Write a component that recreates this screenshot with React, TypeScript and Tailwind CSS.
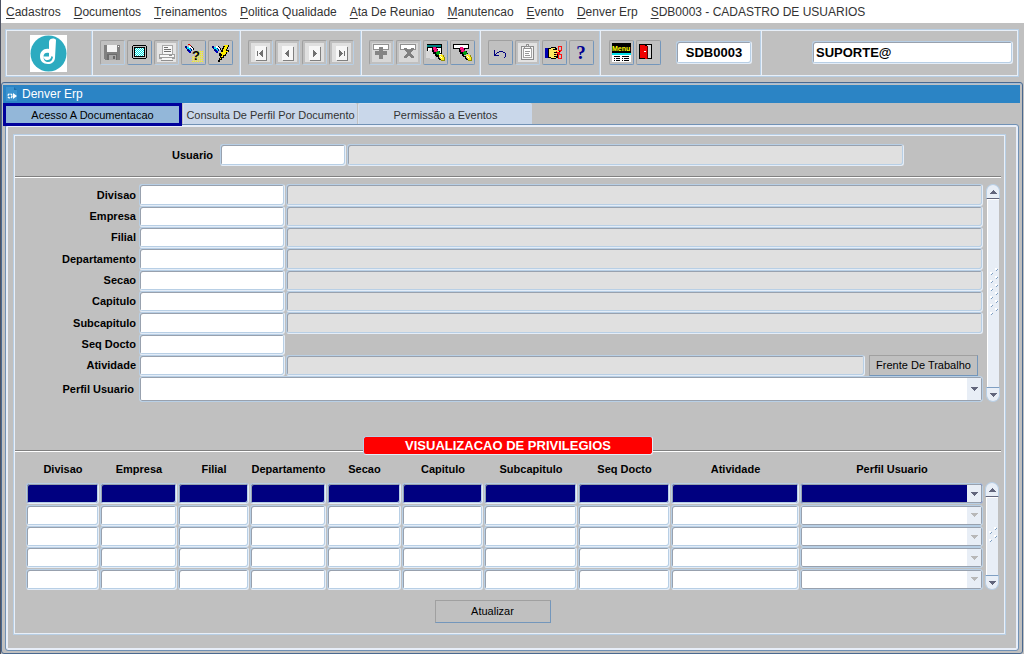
import { useState, type ReactNode } from "react";
import clsx from "clsx";

const BEVEL =
  "rounded-[3px] border border-t-[#b8cfe5] border-l-[#b8cfe5] border-r-[#e4edf8] border-b-[#e4edf8] shadow-[inset_1px_1px_0_#98a1ae,inset_-1px_-1px_0_#b8cfe5] outline-none";

const SEPARATOR = "border-r border-[#e8eff8] shadow-[inset_-1px_0_0_#b8cfe5]";

const MENU = [
  "Cadastros",
  "Documentos",
  "Treinamentos",
  "Politica Qualidade",
  "Ata De Reuniao",
  "Manutencao",
  "Evento",
  "Denver Erp",
  "SDB0003 - CADASTRO DE USUARIOS",
];

const TABS = ["Acesso A Documentacao", "Consulta De Perfil Por Documento", "Permissão a Eventos"];

const FIELDS = [
  "Divisao",
  "Empresa",
  "Filial",
  "Departamento",
  "Secao",
  "Capitulo",
  "Subcapitulo",
  "Seq Docto",
  "Atividade",
];

const COLUMNS = [
  { label: "Divisao", width: "w-[74px]" },
  { label: "Empresa", width: "w-[78px]" },
  { label: "Filial", width: "w-[72px]" },
  { label: "Departamento", width: "w-[77px]" },
  { label: "Secao", width: "w-[75px]" },
  { label: "Capitulo", width: "w-[82px]" },
  { label: "Subcapitulo", width: "w-[94px]" },
  { label: "Seq Docto", width: "w-[93px]" },
  { label: "Atividade", width: "w-[129px]" },
  { label: "Perfil Usuario", width: "" },
];

function Icon({ children }: { children: ReactNode }) {
  return (
    <svg width="19" height="19" viewBox="0 0 19 19" shapeRendering="crispEdges" className="shrink-0 overflow-visible" aria-hidden="true">
      {children}
    </svg>
  );
}

function Torch() {
  return (
    <>
      <path d="M1 3h2v1h2v1h2v1h1v2h-1v2h-1v-1h-1v-1h-2v-2h-1v-1h-1z" fill="#000080" />
      <path d="M3 4h2v1h1v1h1v2h-1v-1h-1v-1h-2z" fill="#00e5ff" />
      <path d="M5 3h2v1h1v1h1v2h-1v-1h-1v-1h-2z" fill="#fff" />
      <path d="M7 3h1v1h1v1h1v2h-1v-2h-1v-1h-1z" fill="#000" />
      <path d="M4 8h3v1h-1v1h-1v-1h-1z" fill="#0000c8" />
    </>
  );
}

function Marker() {
  return (
    <>
      <path d="M6 5h1v2h1v2h2v2h1v2h2v2h2v2h-2v-1h-1v-2h-2v-1h-1v-2h-2v-2h-1zM10 5h1v1h1v2h2v2h1v1h-1v-1h-2v-2h-1v-2h-1z" fill="#000" />
      <path d="M7 4h3v1h1v2h1v1h-1v1h-3v-2h-1z" fill="#f00080" />
      <path d="M8 5h1v1h-1zM9 7h1v1h-1z" fill="#ff5050" />
      <path d="M11 8h2v1h1v2h-1v1h-2v-1h-1v-2h1z" fill="#00a010" />
      <path d="M13 12h2v-1h1v1h1v2h1v3h-3v-1h-1v-2h-1z" fill="#ffee20" />
      <path d="M17 12h1v2h1v4h-4v-1h3v-3h-1z" fill="#909000" />
      <path d="M14 13h1v1h1v1h-1v-1h-1z" fill="#fff" />
    </>
  );
}

function Plate({ children }: { children: ReactNode }) {
  return (
    <Icon>
      <rect width="19" height="19" fill="#e0e0e0" />
      <rect x="5" y="4" width="11" height="14" fill="#808080" />
      <rect x="4" y="3" width="11" height="14" fill="#f7f7f7" />
      {children}
    </Icon>
  );
}

const ICONS: Record<string, ReactNode> = {
  Salvar: (
    <Icon>
      <path d="M1 2h16v15h-15v-1h-1z" fill="#808080" />
      <rect x="4" y="2" width="10" height="7" fill="#f4f4f4" />
      <rect x="4" y="11" width="10" height="6" fill="#6c6c6c" />
      <rect x="6" y="12" width="7" height="5" fill="#a8a8a8" />
      <rect x="10" y="13" width="2" height="3" fill="#686868" />
      <rect x="15" y="3" width="1" height="1" fill="#fff" />
    </Icon>
  ),
  Tela: (
    <Icon>
      <defs>
        <pattern id="screen-dither" width="2" height="2" patternUnits="userSpaceOnUse">
          <rect width="2" height="2" fill="#fff" />
          <rect width="1" height="1" fill="#00e0e0" />
          <rect x="1" y="1" width="1" height="1" fill="#00e0e0" />
        </pattern>
      </defs>
      <path d="M3 2h13v1h1v12h-1v1h-13v-1h-1v-12h1z" fill="#000" />
      <path d="M3 3h13v12h-13z" fill="#c0c0c0" />
      <path d="M4 4h11v10h-11z" fill="#000" />
      <rect x="5" y="5" width="9" height="8" fill="url(#screen-dither)" />
    </Icon>
  ),
  Imprimir: (
    <Icon>
      <rect width="19" height="19" fill="#e4e4e4" />
      <path d="M5 2h11v9h-11z" fill="#a8a8a8" />
      <path d="M6 3h9v8h-9z" fill="#f8f8f8" />
      <path d="M7 4h4v1h-4zM7 6h7v1h-7zM7 8h7v1h-7z" fill="#707070" />
      <path d="M2 11h16v5h-16z" fill="#a0a0a0" />
      <path d="M3 12h14v2h-14z" fill="#f8f8f8" />
      <path d="M12 12h3v1h-3z" fill="#909090" />
      <path d="M5 15h10v2h-10z" fill="#f8f8f8" />
      <path d="M4 17h12v1h-12z" fill="#909090" />
    </Icon>
  ),
  "Entrar consulta": (
    <Icon>
      <defs>
        <pattern id="yellow-dots" width="2" height="2" patternUnits="userSpaceOnUse">
          <rect width="1" height="1" fill="#ffff00" />
          <rect x="1" y="1" width="1" height="1" fill="#ffe860" />
        </pattern>
      </defs>
      <path d="M11 8h8v11h-11v-6h3z" fill="url(#yellow-dots)" />
      <rect x="4" y="1" width="2" height="1" fill="#e00000" />
      <rect x="6" y="2" width="1" height="1" fill="#e00000" />
      <Torch />
      <text x="8" y="17" fontSize="13" fontWeight="bold" fill="#000">?</text>
    </Icon>
  ),
  "Executar consulta": (
    <Icon>
      <Torch />
      <path d="M13 2h5v2h-1v2h-1v1h2v2h-2v2h-1v2h-2v2h-2v2h-2v2h-2v-2h1v-2h1v-2h-1v-3h2v-3h1v-2h1v-2h1z" fill="#000" />
      <path d="M13 2h4v2h-1v2h-1v2h2v1h-2v2h-1v1h-2v2h-2v2h-1v-1h1v-2h1v-2h-1v-2h2v-3h1v-2h1z" fill="#ffee00" />
    </Icon>
  ),
  Primeiro: (
    <Plate>
      <path d="M6 8h1v5h-1zM8 10h1v1h-1zM9 9h1v3h-1zM10 8h1v5h-1zM11 7h1v7h-1z" fill="#707070" />
    </Plate>
  ),
  Anterior: (
    <Plate>
      <path d="M7 10h1v1h-1zM8 9h1v3h-1zM9 8h1v5h-1zM10 7h1v7h-1z" fill="#707070" />
    </Plate>
  ),
  Proximo: (
    <Plate>
      <path d="M8 7h1v7h-1zM9 8h1v5h-1zM10 9h1v3h-1zM11 10h1v1h-1z" fill="#707070" />
    </Plate>
  ),
  Ultimo: (
    <Plate>
      <path d="M7 7h1v7h-1zM8 8h1v5h-1zM9 9h1v3h-1zM10 10h1v1h-1zM12 8h1v5h-1z" fill="#707070" />
    </Plate>
  ),
  Inserir: (
    <Icon>
      <rect width="19" height="19" fill="#d8d8d8" />
      <path d="M1 1h16v6h-16z" fill="#909090" />
      <path d="M2 2h14v4h-14z" fill="#fff" />
      <path d="M7 4h4v4h4v4h-4v4h-4v-4h-4v-4h4z" fill="#858585" />
    </Icon>
  ),
  Excluir: (
    <Icon>
      <rect width="19" height="19" fill="#d8d8d8" />
      <path d="M1 1h16v6h-16z" fill="#909090" />
      <path d="M2 2h14v4h-14z" fill="#fff" />
      <path
        d="M5 5h3v1h1v1h2v-1h1v-1h3v2h-1v1h-1v1h-1v2h1v1h1v1h1v2h-3v-1h-1v-1h-2v1h-1v1h-3v-2h1v-1h1v-1h1v-2h-1v-1h-1v-1h-1z"
        fill="#808080"
      />
    </Icon>
  ),
  "Limpar tela": (
    <Icon>
      <path d="M1 1h15v12h-15z" fill="#000" />
      <path d="M1 2h14v2h-14z" fill="#008080" />
      <path d="M2 5h13v7h-13z" fill="#fff" />
      <path d="M0 8h3v-1h3v1h3v3h2v2h-2v3h-5v-1h-4z" fill="#d8d8d8" />
      <Marker />
    </Icon>
  ),
  "Limpar registro": (
    <Icon>
      <path d="M0 1h16v5h-16z" fill="#000" />
      <path d="M1 2h14v3h-14z" fill="#fff" />
      <Marker />
    </Icon>
  ),
  Desfazer: (
    <Icon>
      <path
        d="M3 7h1v4h1v-1h1v-1h2v-1h4v1h2v1h1v4h-1v1h-1v-1h1v-4h-2v-1h-4v1h-2v1h-1v1h3v1h-5z"
        fill="#000080"
      />
    </Icon>
  ),
  Copiar: (
    <Icon>
      <rect width="19" height="19" fill="#e2e2e2" />
      <path d="M3 3h13v14h-13z" fill="#8c8c8c" />
      <path d="M4 4h11v12h-11z" fill="#f4f4f4" />
      <path d="M5 5h9v10h-9z" fill="#a4a4a4" />
      <path d="M6 6h7v8h-7z" fill="#fff" />
      <path d="M8 1h3v2h2v3h-7v-3h2z" fill="#909090" />
      <path d="M9 2h1v1h-1zM7 4h5v1h-5z" fill="#f0f0f0" />
      <path d="M7 8h5v1h-5zM7 10h4v1h-4zM7 12h5v1h-5z" fill="#989898" />
    </Icon>
  ),
  Recortar: (
    <Icon>
      <path d="M0 5h3v10h-3z" fill="#0000b0" />
      <path d="M3 5h3v-1h5v1h1v2h3v3h-2v5h-2v1h-5v-1h-3z" fill="#000" />
      <path d="M4 6h2v-1h4v1h-2v1h6v2h-5v1h3v1h-3v1h3v1h-3v1h2v1h-5v-1h-2z" fill="#ffe860" />
      <g fill="none" stroke="#ff1010">
        <rect x="13.500" y="3.500" width="3" height="4" />
        <rect x="13.500" y="11.500" width="3" height="4" />
        <path d="M11 8l5 4M11 12l5-4" />
      </g>
    </Icon>
  ),
  Ajuda: (
    <Icon>
      <text x="9" y="16" textAnchor="middle" fontSize="19" fontWeight="bold" fontFamily="Liberation Serif, serif" fill="#000090">?</text>
    </Icon>
  ),
  Menu: (
    <Icon>
      <path d="M0 0h19v10h-19z" fill="#000" />
      <text x="0" y="8" fontSize="7" fontWeight="bold" fill="#ffff00">Menu</text>
      <path d="M0 10h19v2h-19z" fill="#00e0e8" />
      <path d="M0 12h19v7h-19z" fill="#fff" />
      <path d="M2 13h6v1h-6zM10 13h7v1h-7zM2 15h1v1h-1zM4 15h4v1h-4zM10 15h1v1h-1zM12 15h5v1h-5zM2 17h1v1h-1zM4 17h4v1h-4zM10 17h1v1h-1zM12 17h5v1h-5z" fill="#000" />
    </Icon>
  ),
  Sair: (
    <Icon>
      <path d="M0 1h13v15h-13z" fill="#000" />
      <path d="M8 2h4v13h-4z" fill="#d8d8d8" />
      <path d="M1 2h5v1h2v13h-2v-1h-5z" fill="#f00000" />
      <path d="M5 8h2v1h-2z" fill="#fff" />
      <path d="M8 3h1v13h-1z" fill="#600000" />
    </Icon>
  ),
};

const DISABLED = ["Salvar", "Imprimir", "Primeiro", "Anterior", "Proximo", "Ultimo", "Inserir", "Excluir", "Copiar"];

function ToolButton({ name }: { name: string }) {
  const off = DISABLED.includes(name);
  return (
    <button
      type="button"
      aria-label={name}
      title={name}
      disabled={off}
      className={clsx(
        "flex h-[25px] w-[25px] items-center justify-center rounded-[2px] border border-t-[#a0a0a0] border-l-[#a0a0a0] p-px",
        off ? "border-r-[#b8cfe5] border-b-[#b8cfe5]" : "border-r-[#7396bb] border-b-[#7396bb]"
      )}
    >
      {ICONS[name]}
    </button>
  );
}

function ToolGroup({ names, className }: { names: string[]; className: string }) {
  return (
    <div className={clsx("flex items-center gap-[2px] pt-[9px] pb-[10px] pl-[7px]", SEPARATOR, className)}>
      {names.map(n => <ToolButton key={n} name={n} />)}
    </div>
  );
}

function Logo() {
  return (
    <svg width="37" height="37" viewBox="0 0 37 37" role="img" aria-label="Denver">
      <rect width="37" height="37" fill="#fff" />
      <circle cx="18.500" cy="18.500" r="18" fill="#2cabc0" />
      <path d="M19 7c0-2.500 2-3.500 4-3.500 1.500 0 2.500.5 3 1.500l-1 18c-.5 4-3.500 6-7 6-5 0-8-3-8-7.500 0-5 4-8.500 9-7.500z" fill="#fff" />
      <path d="M19 18c-3.500-1-5.500 1-5.500 3.500h5.500z" fill="#2cabc0" />
      <path d="M13.500 22c.5 2.500 2.500 3.500 4.500 3 2.500-.5 3-2 3.500-4l1.500 1c-.5 3-2 5-5 5-2.500 0-4.500-2-4.500-5z" fill="#2cabc0" />
    </svg>
  );
}

function Arrow({ up, dim }: { up?: boolean; dim?: boolean }) {
  return (
    <svg width="7" height="4" viewBox="0 0 7 4" shapeRendering="crispEdges" aria-hidden="true">
      <path
        d={up ? "M3 0h1v1h1v1h1v1h1v1H0V3h1V2h1V1h1z" : "M0 0h7v1H6v1H5v1H4v1H3V3H2V2H1V1H0z"}
        fill={dim ? "#b8b8b8" : "#62667c"}
      />
    </svg>
  );
}

function ScrollBar({ dots }: { dots: number }) {
  return (
    <div className="flex w-[14px] shrink-0 flex-col">
      <button type="button" aria-label="Subir" className="flex h-[15px] items-center justify-center rounded-t-[7px] border border-[#b8cfe5] border-b-[#62667c] bg-[#e8eef6]">
        <Arrow up />
      </button>
      <div className="mx-px flex flex-1 items-center justify-end border-t border-l border-white bg-[#e8eef6]">
        <svg width="10" height={dots * 8 + 4} shapeRendering="crispEdges" aria-hidden="true">
          {Array.from({ length: dots }, (_, i) => (
            <g key={i}>
              <path d={`M6 ${i * 8}h2v2h-2zM1 ${i * 8 + 4}h2v2h-2z`} fill="#fff" />
              <path d={`M8 ${i * 8 + 1}h1v1h-1zM7 ${i * 8 + 2}h1v1h-1zM3 ${i * 8 + 5}h1v1h-1zM2 ${i * 8 + 6}h1v1h-1z`} fill="#7f9fc2" />
            </g>
          ))}
        </svg>
      </div>
      <button type="button" aria-label="Descer" className="flex h-[15px] items-center justify-center rounded-b-[7px] border border-[#b8cfe5] border-t-[#7f9fc2] bg-[#e8eef6]">
        <Arrow />
      </button>
    </div>
  );
}

type ComboProps = { id?: string; label?: string; dim?: boolean; active?: boolean; className?: string };

function Combo({ id, label, dim, active, className }: ComboProps) {
  return (
    <div className={clsx("relative", className)}>
      <select
        id={id}
        aria-label={label}
        className={clsx(
          "block h-full w-full appearance-none rounded-[3px] border border-[#b8cfe5] px-1 text-[11px] shadow-[inset_0_0_0_1px_#98a1ae] outline-none",
          active ? "bg-[#000080]" : "bg-white"
        )}
      >
        <option value=""></option>
      </select>
      <span className="pointer-events-none absolute inset-y-[2px] right-[2px] flex w-[14px] items-center justify-center bg-[#e8eef6]">
        <Arrow dim={dim} />
      </span>
    </div>
  );
}

function Rule() {
  return <div className="h-[2px] border-t border-[#808080] bg-white" />;
}

export default function App() {
  const [tab, setTab] = useState(0);

  return (
    <div className="flex min-h-screen flex-col border-l border-[#4c5263] bg-[#c0c0c0] font-['Liberation_Sans',Arial,sans-serif] text-[11px] text-black">
      {/* Menu */}
      <nav className="flex h-[23px] items-center gap-[13px] bg-white pl-[5px] text-[12px] text-[#333]">
        {MENU.map(m => (
          <a key={m} href="#" className="whitespace-nowrap">
            <u className="underline-offset-2">{m[0]}</u>{m.slice(1)}
          </a>
        ))}
      </nav>

      {/* Toolbar */}
      <div className="pt-[6px] pr-[5px] pb-[5px] pl-[4px]">
        <div className="flex h-[48px] border border-[#b8cfe5] p-px shadow-[inset_0_0_0_1px_#e8eff8]">
          <div className={clsx("flex w-[86px] items-center pl-[23px]", SEPARATOR)}>
            <Logo />
          </div>
          <ToolGroup className="w-[148px]" names={["Salvar", "Tela", "Imprimir", "Entrar consulta", "Executar consulta"]} />
          <ToolGroup className="w-[121px]" names={["Primeiro", "Anterior", "Proximo", "Ultimo"]} />
          <ToolGroup className="w-[119px]" names={["Inserir", "Excluir", "Limpar tela", "Limpar registro"]} />
          <ToolGroup className="w-[120px]" names={["Desfazer", "Copiar", "Recortar", "Ajuda"]} />
          <div className={clsx("flex w-[161px] items-center gap-[2px] pt-[9px] pb-[10px] pl-[8px]", SEPARATOR)}>
            <ToolButton name="Menu" />
            <ToolButton name="Sair" />
            <input
              aria-label="Programa"
              defaultValue="SDB0003"
              className={clsx(BEVEL, "ml-[13px] h-[23px] w-[76px] bg-white text-center text-[13px] font-bold")}
            />
          </div>
          <div className="flex flex-1 items-center justify-end pt-[9px] pr-[4px] pb-[10px]">
            <input
              aria-label="Usuario conectado"
              defaultValue="SUPORTE@"
              className={clsx(BEVEL, "h-[23px] w-[201px] bg-white px-[3px] text-[13px] font-bold")}
            />
          </div>
        </div>
      </div>

      {/* Window */}
      <main className="mr-px flex flex-1 flex-col rounded-[3px] border border-[#4a6990] pt-[2px] pr-[2px] pb-[2px] pl-px shadow-[inset_0_1px_0_#a3bdd8]">
        <header className="flex h-[18px] items-center gap-[4px] bg-[#2b84c5] pl-[3px] text-[12px] text-white">
          <svg width="12" height="14" viewBox="0 0 12 14" aria-hidden="true">
            <path d="M0 0h8l3 3v11h-11z" fill="#3b93cf" />
            <path d="M8 0v3h3z" fill="#1d6da8" />
            <circle cx="4" cy="9" r="2" fill="none" stroke="#fff" strokeWidth="1.500" strokeDasharray="2 1" />
            <path d="M7 6l4 3-4 3z" fill="#fff" />
          </svg>
          <h1>Denver Erp</h1>
        </header>

        <div role="tablist" className="relative -mb-[2px] flex h-[23px] gap-px">
          {TABS.map((t, i) => (
            <button
              key={t}
              type="button"
              role="tab"
              aria-selected={tab === i}
              onClick={() => setTab(i)}
              className={clsx(
                "whitespace-nowrap",
                tab === i
                  ? "w-[179px] border-[3px] border-[#00009c] bg-[#93b7d9] pt-px"
                  : "mb-[2px] w-[174px] rounded-t-[2px] border-t border-l border-[#d5e0ee] bg-[#c9d7ea] pt-[2px] text-[#333]"
              )}
            >
              {t}
            </button>
          ))}
        </div>

        <div role="tabpanel" className="mr-px ml-[2px] flex-1 rounded-[3px] border border-[#7091b5] pt-[9px] pr-[12px] pb-[14px] pl-[7px] shadow-[inset_0_0_0_2px_#e8eef8]">
          <form
            className="border border-[#b8cfe5] pt-px pr-[4px] pb-[11px] pl-px shadow-[inset_0_0_0_1px_#e8eff8]"
            onSubmit={e => e.preventDefault()}
          >
            <div className="flex h-[30px] pt-[8px] pr-[97px]">
              <label htmlFor="usuario" className="w-[198px] text-right leading-[22px] font-bold">Usuario</label>
              <input id="usuario" className={clsx(BEVEL, "ml-[7px] h-[22px] w-[126px] bg-white px-1")} />
              <input aria-label="Nome do usuario" readOnly className={clsx(BEVEL, "ml-px h-[22px] min-w-0 flex-1 bg-[#e0e0e0] px-1")} />
            </div>

            <div className="mt-[10px] mb-[6px]">
              <Rule />
            </div>

            <div className="flex gap-[3px] pr-px">
              <div className="flex-1">
                {FIELDS.map(f => (
                  <div key={f} className="flex h-[21px] nth-[3n+1]:h-[22px]">
                    <label htmlFor={f} className="w-[121px] self-center text-right font-bold">{f}</label>
                    <input id={f} className={clsx(BEVEL, "ml-[3px] w-[146px] bg-white px-1")} />
                    {f !== "Seq Docto" && (
                      <input aria-label={`Descricao ${f}`} readOnly className={clsx(BEVEL, "ml-px min-w-0 flex-1 bg-[#e0e0e0] px-1")} />
                    )}
                    {f === "Atividade" && (
                      <button
                        type="button"
                        className="mr-[5px] ml-[4px] w-[109px] border border-t-[#a0a0a0] border-r-[#7396bb] border-b-[#7396bb] border-l-[#a0a0a0]"
                      >
                        Frente De Trabalho
                      </button>
                    )}
                  </div>
                ))}
                <div className="flex h-[26px]">
                  <label htmlFor="perfil" className="w-[119px] self-center text-right font-bold">Perfil Usuario</label>
                  <Combo id="perfil" className="ml-[5px] flex-1" />
                </div>
              </div>
              <ScrollBar dots={6} />
            </div>

            <div className="relative mt-[34px] flex h-[19px] justify-center">
              <div className="absolute inset-x-0 top-[14px]">
                <Rule />
              </div>
              <h2 className="relative w-[290px] rounded-[3px] border border-t-[#b8cfe5] border-r-[#e4edf8] border-b-[#e4edf8] border-l-[#b8cfe5] bg-[#f00] text-center text-[13px] leading-[17px] font-bold text-white">
                VISUALIZACAO DE PRIVILEGIOS
              </h2>
            </div>

            {/* Privileges */}
            <div className="flex items-end gap-px pr-[2px] pl-[11px]">
              <table className="min-w-0 flex-1 table-fixed border-collapse">
                <thead>
                  <tr className="h-[28px]">
                    {COLUMNS.map(c => (
                      <th key={c.label} scope="col" className={clsx("p-0 align-middle font-bold whitespace-nowrap", c.width)}>{c.label}</th>
                    ))}
                  </tr>
                </thead>
                <tbody>
                  {[1, 2, 3, 4, 5].map(row => (
                    <tr key={row} className="h-[21px] nth-[3n+2]:h-[22px]">
                      {COLUMNS.map((c, i) => (
                        <td key={c.label} className="p-0 pr-px">
                          {i < 9 ? (
                            <input
                              aria-label={`${c.label} ${row}`}
                              className={clsx(BEVEL, "block h-[21px] w-full px-1", row === 1 ? "bg-[#000080]" : "bg-white")}
                            />
                          ) : (
                            <Combo label={`${c.label} ${row}`} dim={row > 1} active={row === 1} className="h-[21px]" />
                          )}
                        </td>
                      ))}
                    </tr>
                  ))}
                </tbody>
              </table>
              <div className="flex h-[108px]">
                <ScrollBar dots={2} />
              </div>
            </div>

            <div className="mt-[10px] flex justify-center">
              <button
                type="submit"
                className="mr-[31px] h-[23px] w-[116px] border border-t-[#a0a0a0] border-r-[#7396bb] border-b-[#7396bb] border-l-[#a0a0a0]"
              >
                Atualizar
              </button>
            </div>
          </form>
        </div>
      </main>
    </div>
  );
}
